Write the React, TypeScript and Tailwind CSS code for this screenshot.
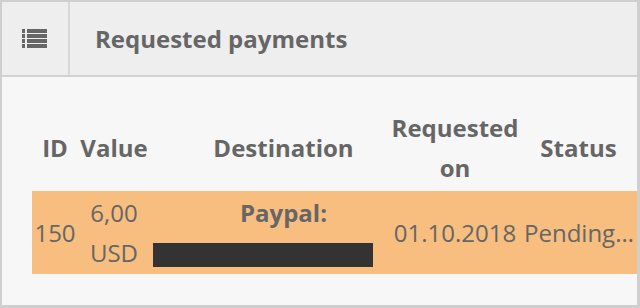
import React from 'react'

type Payment = {
  id: number
  amount: string
  currency: string
  method: string
  requestedOn: string
  status: string
}

const payments: Payment[] = [
  { id: 150, amount: '6,00', currency: 'USD', method: 'Paypal:', requestedOn: '01.10.2018', status: 'Pending approval' },
]

function ListIcon() {
  return (
    <svg width="25" height="19" viewBox="0 0 25 19" fill="#666">
      {[0, 5, 10, 15].map(y => (
        <g key={y}>
          <rect x="0" y={y} width="3" height="4" />
          <rect x="5" y={y} width="20" height="4" />
        </g>
      ))}
    </svg>
  )
}

export default function App() {
  return (
    <div
      className="w-[640px] h-[308px] flex flex-col border-t-2 border-l-2 border-r-[3px] border-b-[3px] border-[#cfcfcf] text-[#666]"
      style={{ fontFamily: '"Open Sans", sans-serif' }}
    >
      {/* Header */}
      <div className="h-[75px] flex bg-[#eeeeee] border-b-2 border-[#d2d2d2]">
        <div className="w-[68px] flex items-center justify-center border-r-2 border-[#d8d8d8] pr-[1px]">
          <ListIcon />
        </div>
        <h2 className="flex items-center pl-[25px] text-[24px] font-bold">Requested payments</h2>
      </div>

      {/* Table */}
      <div className="flex-1 bg-[#f7f7f7] pl-[30px] pt-[34px]">
        <div className="grid grid-cols-[46px_72px_242px_126px_119px] text-[24px] leading-[40px]">
          <div className="h-[80px] pb-[7px] flex items-center justify-center font-bold">ID</div>
          <div className="h-[80px] pb-[7px] flex items-center justify-center font-bold">Value</div>
          <div className="h-[80px] pb-[7px] flex items-center justify-center font-bold pl-[25px]">Destination</div>
          <div className="h-[80px] pb-[7px] flex items-center justify-center text-center font-bold">Requested<br />on</div>
          <div className="h-[80px] pb-[7px] pl-[2px] flex items-center justify-center font-bold">Status</div>

          {payments.map(p => (
            <React.Fragment key={p.id}>
              <div className="h-[83px] bg-[#f7be80] flex items-center justify-center">{p.id}</div>
              <div className="h-[83px] bg-[#f7be80] flex flex-col items-center justify-center">
                <span>{p.amount}</span>
                <span>{p.currency}</span>
              </div>
              <div className="h-[83px] bg-[#f7be80] flex flex-col pt-[2px]">
                <span className="font-bold text-center pl-[25px]">{p.method}</span>
                <span className="block w-[220px] h-[24px] ml-[3px] mt-[10px] bg-[#333333]" />
              </div>
              <div className="h-[83px] bg-[#f7be80] flex items-center justify-center">{p.requestedOn}</div>
              <div className="h-[83px] bg-[#f7be80] flex items-center pl-[6px] pr-[3px] min-w-0">
                <span className="truncate">{p.status}</span>
              </div>
            </React.Fragment>
          ))}
        </div>
      </div>
    </div>
  )
}
